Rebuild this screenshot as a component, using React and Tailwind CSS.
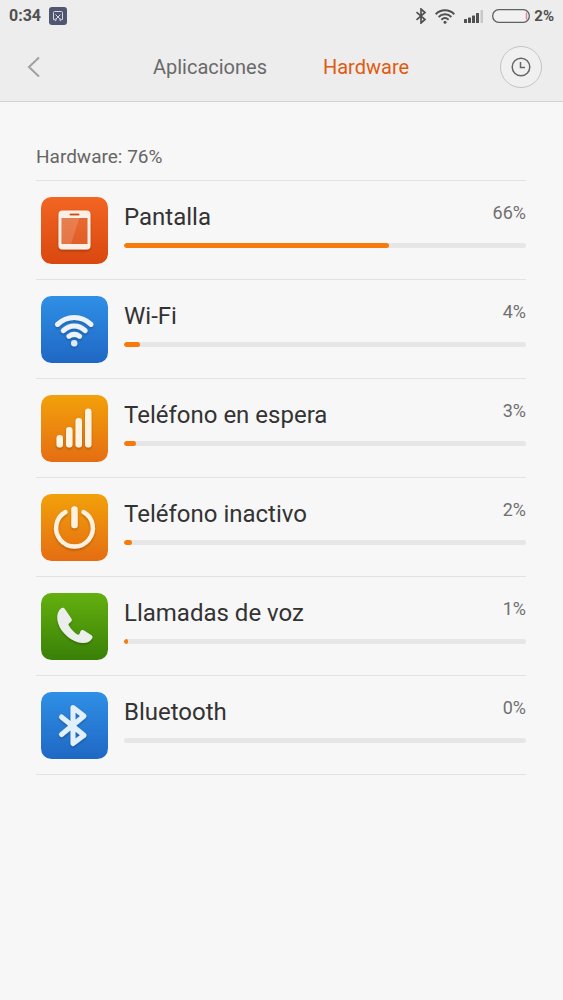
import React from 'react';

function Tile({ id, from, to, children }) {
  return (
    <svg viewBox="0 0 67 67" className="size-[67px] shrink-0" aria-hidden="true">
      <defs>
        <linearGradient id={`${id}-bg`} x1="0" y1="0" x2="0" y2="1">
          <stop offset="0" stopColor={from} />
          <stop offset="1" stopColor={to} />
        </linearGradient>
        <filter id={`${id}-shadow`} x="-20%" y="-20%" width="140%" height="150%">
          <feDropShadow dx="0" dy="1.5" stdDeviation="1" floodColor="#000" floodOpacity="0.25" />
        </filter>
      </defs>
      <rect width="67" height="67" rx="10.5" fill={`url(#${id}-bg)`} />
      <g filter={`url(#${id}-shadow)`}>{children}</g>
    </svg>
  );
}

function ScreenIcon() {
  return (
    <Tile id="screen" from="#f26522" to="#d9480f">
      <path
        fillRule="evenodd"
        fill="#fdeee6"
        d="M21.500 13.500h24a4 4 0 0 1 4 4v31a4 4 0 0 1-4 4h-24a4 4 0 0 1-4-4v-31a4 4 0 0 1 4-4zM20.500 21v26h26V21zM29.500 16.500a1 1 0 0 0 0 2h8a1 1 0 0 0 0-2z"
      />
      <path d="M20.500 21h18L30 47h-9.500z" fill="#fff" fillOpacity="0.2" />
      <path d="M38.500 21h8v26H30z" fill="#fff" fillOpacity="0.07" />
    </Tile>
  );
}

function WifiIcon() {
  return (
    <Tile id="wifi" from="#2f8fe6" to="#1f68c4">
      <g fill="none" stroke="#eef3fa" strokeLinecap="round" strokeWidth="5">
        <path d="M16.500 28.400C26 19.100 40.500 19.100 50 28.400" />
        <path d="M22.300 34.600C29 28.500 37.500 28.500 44.200 34.600" />
        <path d="M28 40.200C31.500 37.700 35 37.700 38.500 40.200" />
      </g>
      <circle cx="33.200" cy="47.200" r="3.200" fill="#dfe8f4" />
    </Tile>
  );
}

function SignalIcon() {
  return (
    <Tile id="signal" from="#f2a10a" to="#e56d12">
      <g fill="#fff3e3">
        <rect x="15.500" y="40" width="6.500" height="12.500" rx="3.200" />
        <rect x="25" y="32" width="6.500" height="20.500" rx="3.200" />
        <rect x="34.500" y="23" width="6.500" height="29.500" rx="3.200" />
        <rect x="44" y="13.500" width="6.500" height="39" rx="3.200" />
      </g>
    </Tile>
  );
}

function PowerIcon() {
  return (
    <Tile id="power" from="#f2a10a" to="#e56d12">
      <g fill="none" stroke="#fff1df" strokeLinecap="round">
        <path d="M24.500 18A18.400 18.400 0 1 0 42.500 18" strokeWidth="4.400" />
        <path d="M33.500 15.500v15.500" strokeWidth="6.500" />
      </g>
    </Tile>
  );
}

function PhoneIcon() {
  return (
    <Tile id="phone" from="#64b00f" to="#398007">
      <path
        fill="#eceeec"
        d="M20.200 15.200C21.500 14.200 23 14.600 23.900 16L30.300 25.500C31.200 26.900 30.900 27.900 29.900 28.800L27.600 30.800C27.200 31.500 27.500 32.200 28.200 33.200C30.200 36.200 32.800 39 35.800 41.200C36.800 41.900 37.800 41.900 38.500 41L39.500 38.200C40.200 37 41.300 36.700 42.600 37.300L50.500 42.200C51.800 43.100 51.800 44.200 51 45.400C48.500 49.600 43 51 37 49.200C26.500 45.800 17.500 36.500 16.300 26.200C15.900 21.500 17.200 17.500 20.200 15.200Z"
      />
    </Tile>
  );
}

function BluetoothIcon() {
  return (
    <Tile id="bluetooth" from="#2f8fe6" to="#1f68c4">
      <path
        d="M20.500 25L43 43.300L32 51.500V15.500L43 24L20.500 42.500"
        fill="none"
        stroke="#e2f0fc"
        strokeWidth="5"
        strokeLinecap="round"
        strokeLinejoin="round"
      />
    </Tile>
  );
}

const items = [
  { name: 'Pantalla', value: 66, Icon: ScreenIcon },
  { name: 'Wi-Fi', value: 4, Icon: WifiIcon },
  { name: 'Teléfono en espera', value: 3, Icon: SignalIcon },
  { name: 'Teléfono inactivo', value: 2, Icon: PowerIcon },
  { name: 'Llamadas de voz', value: 1, Icon: PhoneIcon },
  { name: 'Bluetooth', value: 0, Icon: BluetoothIcon },
];

function StatusBar() {
  return (
    <div className="flex h-8 items-center justify-between px-[9px] text-[#505050]">
      <div className="flex items-center gap-2">
        <span className="text-base font-bold">0:34</span>
        <svg viewBox="0 0 18 18" className="size-[18px]" aria-hidden="true">
          <rect width="18" height="18" rx="3" fill="#50566f" />
          <g fill="none" stroke="#d5d8e3" strokeWidth="1">
            <path d="M5.500 12.500H4.500V5.500a1 1 0 0 1 1-1h7a1 1 0 0 1 1 1v7h-1" />
            <path d="M6.500 7.500l4.500 4.500M11.500 7.500L7 12" />
            <circle cx="6.500" cy="12.800" r="0.800" />
            <circle cx="11.500" cy="12.800" r="0.800" />
          </g>
        </svg>
      </div>
      <div className="flex items-center">
        <svg viewBox="0 0 12 16" className="mr-2 h-4 w-3" aria-hidden="true">
          <path d="M1.500 4.200L10 11.500L6 15V1L10 4.500L1.500 11.800" fill="none" stroke="#505050" strokeWidth="1.700" />
        </svg>
        <svg viewBox="0 0 20 15" className="mr-[9px] h-[15px] w-5" aria-hidden="true">
          <g fill="none" stroke="#505050" strokeWidth="1.900">
            <path d="M0.700 5.200C6 0 14 0 19.300 5.200" />
            <path d="M3.600 8C7.300 4.400 12.700 4.400 16.400 8" />
            <path d="M6.400 10.800C8.600 8.700 11.400 8.700 13.600 10.800" />
          </g>
          <circle cx="10" cy="13.200" r="1.500" fill="#505050" />
        </svg>
        <svg viewBox="0 0 20 14" className="mr-2 h-3.5 w-5" aria-hidden="true">
          <g fill="#505050">
            <rect x="0" y="10" width="3" height="4" rx="0.500" />
            <rect x="4" y="8.500" width="3" height="5.500" rx="0.500" />
            <rect x="8" y="6.500" width="3" height="7.500" rx="0.500" />
            <rect x="12" y="4" width="3" height="10" rx="0.500" />
          </g>
          <rect x="16.500" y="1" width="2.500" height="13" rx="0.500" fill="#c8c8c8" />
        </svg>
        <svg viewBox="0 0 38 14" className="mr-1 h-3.5 w-[38px]" aria-hidden="true">
          <rect x="0.700" y="0.700" width="36.600" height="12.600" rx="6" fill="#f1f1f1" stroke="#606060" strokeWidth="1.300" />
          <path d="M34.500 3.500v7" stroke="#e08aa0" strokeWidth="1.500" />
        </svg>
        <span className="text-[15px] font-bold">2%</span>
      </div>
    </div>
  );
}

export default function App() {
  return (
    <div className="min-h-screen bg-[#f7f7f7] font-['Roboto','Noto_Sans',sans-serif]">
      <header className="border-b border-[#d2d2d2] bg-[#ededed]">
        <StatusBar />
        <div className="flex h-[69px] items-center justify-between pr-[21px] pl-5">
          <button type="button" aria-label="Atrás" className="flex size-[42px] items-center pl-[7px]">
            <svg viewBox="0 0 14 22" className="h-[22px] w-3.5" aria-hidden="true">
              <path d="M12 1.500L2 11L12 20.500" fill="none" stroke="#a0a0a0" strokeWidth="2" />
            </svg>
          </button>
          <nav className="flex gap-14 text-xl">
            <a href="#aplicaciones" className="text-[#6a6a6a]">Aplicaciones</a>
            <a href="#hardware" aria-current="page" className="text-[#e15a10]">Hardware</a>
          </nav>
          <button
            type="button"
            aria-label="Historial"
            className="flex size-[42px] items-center justify-center rounded-full border border-[#c4c4c4] bg-[#f0f0f0]"
          >
            <svg viewBox="0 0 20 20" className="size-5" aria-hidden="true">
              <circle cx="10" cy="10" r="8.800" fill="none" stroke="#666" strokeWidth="1.500" />
              <path d="M9.500 5v5.500H14" fill="none" stroke="#666" strokeWidth="1.500" />
            </svg>
          </button>
        </div>
      </header>
      <main className="pt-[43px] pr-[37px] pl-9">
        <h1 className="pb-[11px] text-[19px] leading-6 text-[#666]">Hardware: 76%</h1>
        <ul className="border-b border-[#e2e2e2]">
          {items.map(({ name, value, Icon }) => (
            <li key={name} className="flex gap-4 border-t border-[#e2e2e2] pt-4 pb-[15px] pl-[5px]">
              <Icon />
              <div className="min-w-0 flex-1 pt-1">
                <div className="flex items-start justify-between">
                  <span className="text-2xl text-[#333]">{name}</span>
                  <span className="text-lg leading-6 text-[#707070]">{value}%</span>
                </div>
                <div
                  role="progressbar"
                  aria-label={name}
                  aria-valuenow={value}
                  aria-valuemin={0}
                  aria-valuemax={100}
                  className="mt-2.5 h-[5px] overflow-hidden rounded-full bg-[#e6e6e6]"
                >
                  <div className="h-full rounded-full bg-[#f77a0b]" style={{ width: `${value}%` }} />
                </div>
              </div>
            </li>
          ))}
        </ul>
      </main>
    </div>
  );
}
